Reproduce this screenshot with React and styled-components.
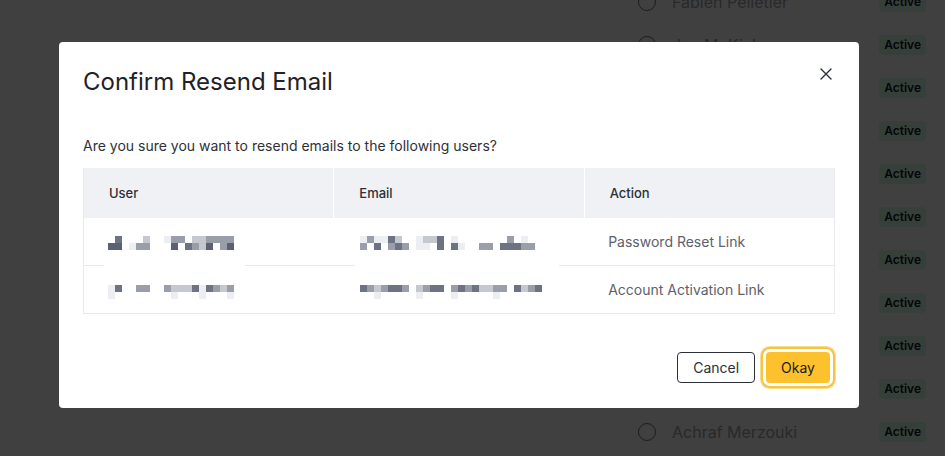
import React from 'react'
import styled, { createGlobalStyle } from 'styled-components'

const GlobalStyle = createGlobalStyle`
    html, body {
        margin: 0;
        padding: 0;
        background: #fff;
        font-family: Inter, "Noto Sans", "Liberation Sans", sans-serif;
        overflow: hidden;
    }
`

const Page = styled.div`
    width: 945px;
    height: 456px;
    overflow: hidden;
`

const UserList = styled.ul`
    list-style: none;
    margin: -20px 0 0 638px;
    padding: 0;
    width: 288px;
`

const UserRow = styled.li`
    display: flex;
    align-items: center;
    height: 43px;
`

const Radio = styled.span`
    box-sizing: border-box;
    width: 18px;
    height: 18px;
    border-radius: 50%;
    border: 1.5px solid #6b7280;
    flex-shrink: 0;
`

const UserName = styled.span`
    margin-left: 16px;
    font-size: 16px;
    color: #a3a3a3;
`

const Badge = styled.span`
    margin-left: auto;
    padding: 2px 5px;
    border-radius: 4px;
    background: #dcfce7;
    color: #0f172a;
    font-size: 12px;
    font-weight: 600;
    line-height: 16px;
`

const Overlay = styled.div`
    position: fixed;
    inset: 0;
    background: rgba(0, 0, 0, 0.75);
    display: flex;
    align-items: flex-start;
    padding: 42px 0 0 59px;
`

const Modal = styled.div`
    box-sizing: border-box;
    width: 800px;
    height: 366px;
    background: #fff;
    border-radius: 4px;
    padding: 24px;
    display: flex;
    flex-direction: column;
`

const Header = styled.div`
    display: flex;
    align-items: flex-start;
    justify-content: space-between;
`

const Title = styled.h2`
    margin: 0;
    font-size: 24px;
    font-weight: 400;
    line-height: 32px;
    color: #1f2228;
`

const CloseButton = styled.button`
    border: none;
    background: none;
    padding: 0;
    width: 24px;
    height: 24px;
    margin: -4px -3px 0 0;
    display: flex;
    align-items: center;
    justify-content: center;
    cursor: pointer;
`

const Description = styled.p`
    margin: 38px 0 12px;
    font-size: 14px;
    line-height: 20px;
    color: #2e3138;
`

const Table = styled.table`
    width: 752px;
    border-collapse: collapse;
    border: 1px solid #e8e9ed;
    border-top: none;
    table-layout: fixed;
`

const HeadCell = styled.th`
    height: 50px;
    padding: 0 25px;
    background: #f0f1f5;
    text-align: left;
    font-size: 13px;
    font-weight: 500;
    color: #2b2f38;
    border-left: ${props => (props.$first ? 'none' : '1px solid #fff')};
`

const Cell = styled.td`
    position: relative;
    height: 47px;
    padding: 0 24px;
    font-size: 14px;
    color: #5c616d;
    border-bottom: 1px solid #e8e9ed;
`

const Redaction = styled.div`
    position: absolute;
    left: 20px;
    top: 4px;
    width: ${props => props.$width}px;
    height: 88px;
    background: #fff;
    z-index: 1;
`

const Footer = styled.div`
    margin-top: auto;
    margin-right: 5px;
    display: flex;
    justify-content: flex-end;
    gap: 11px;
    padding-bottom: 1px;
`

const Button = styled.button`
    box-sizing: border-box;
    height: 31px;
    padding: 0 15px;
    border-radius: 4px;
    font-family: inherit;
    font-size: 14px;
    color: ${props => (props.$primary ? '#1a1a1a' : '#2b2f38')};
    background: ${props => (props.$primary ? '#fcc12c' : '#fff')};
    border: ${props => (props.$primary ? 'none' : '1px solid #2b2f38')};
    box-shadow: ${props => (props.$primary ? '0 0 0 3px #fff, 0 0 0 5px #f5c444, 0 0 0 6px #f9dd91' : 'none')};
    cursor: pointer;
`

const shades = { a: '#eceef1', b: '#c5c8cf', c: '#9a9ea9', d: '#6e7383', e: '#5b6172' }

// blurred-out names and addresses, one string per line of 7px cells
const userMosaic = [
    { y: 14, cells: '.d...b..acc.bbcccc' },
    { y: 21, cells: 'ee.acc...e.dcbe.ce' },
    { y: 63, cells: 'ad..cc..cbbbdadcbc' },
    { y: 70, cells: 'a........a...a...a' },
]

const emailMosaic = [
    { y: 14, cells: 'acaadb..abbd.a.......c.a' },
    { y: 21, cells: 'c.d.cdc.aa.d.da..cc.dddcc' },
    { y: 63, cells: 'dcbcddc.bcdd.cdcdbbcc.dbcd' },
    { y: 70, cells: '..a.....a....a.....a......' },
]

const Mosaic = ({ lines, offset, width }) => (
    <svg width={width} height="88" viewBox={`0 0 ${width} 88`}>
        {lines.map(line =>
            line.cells.split('').map((ch, i) =>
                shades[ch] ? (
                    <rect key={`${line.y}-${i}`} x={offset + i * 7} y={line.y} width="7" height="7" fill={shades[ch]} />
                ) : null
            )
        )}
    </svg>
)

// only the rows above and below the dialog show their names
const people = [
    { id: 1, name: 'Fabien Pelletier' },
    { id: 2, name: 'Jan McKinley' },
    { id: 3 },
    { id: 4 },
    { id: 5 },
    { id: 6 },
    { id: 7 },
    { id: 8 },
    { id: 9 },
    { id: 10 },
    { id: 11, name: 'Achraf Merzouki' },
    { id: 12, name: 'Nina Kowalski' },
]

const CloseIcon = () => (
    <svg width="12" height="12" viewBox="0 0 12 12">
        <path d="M1 1L11 11M11 1L1 11" stroke="#2b2f38" strokeWidth="1.4" strokeLinecap="round" />
    </svg>
)

const App = () => {
    return (
        <Page>
            <GlobalStyle />
            <UserList>
                {people.map(person => (
                    <UserRow key={person.id}>
                        <Radio />
                        {person.name && <UserName>{person.name}</UserName>}
                        <Badge>Active</Badge>
                    </UserRow>
                ))}
            </UserList>
            <Overlay>
                <Modal>
                    <Header>
                        <Title>Confirm Resend Email</Title>
                        <CloseButton aria-label="Close">
                            <CloseIcon />
                        </CloseButton>
                    </Header>
                    <Description>Are you sure you want to resend emails to the following users?</Description>
                    <Table>
                        <thead>
                            <tr>
                                <HeadCell $first>User</HeadCell>
                                <HeadCell>Email</HeadCell>
                                <HeadCell>Action</HeadCell>
                            </tr>
                        </thead>
                        <tbody>
                            <tr>
                                <Cell>
                                    <Redaction $width={141}>
                                        <Mosaic lines={userMosaic} offset={4} width={141} />
                                    </Redaction>
                                </Cell>
                                <Cell>
                                    <Redaction $width={205}>
                                        <Mosaic lines={emailMosaic} offset={6} width={205} />
                                    </Redaction>
                                </Cell>
                                <Cell>Password Reset Link</Cell>
                            </tr>
                            <tr>
                                <Cell />
                                <Cell />
                                <Cell>Account Activation Link</Cell>
                            </tr>
                        </tbody>
                    </Table>
                    <Footer>
                        <Button>Cancel</Button>
                        <Button $primary>Okay</Button>
                    </Footer>
                </Modal>
            </Overlay>
        </Page>
    )
}

export default App
